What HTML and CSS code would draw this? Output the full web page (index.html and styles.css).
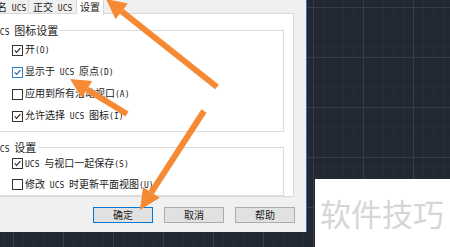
FILE: index.html
```html
<!DOCTYPE html>
<html lang="zh-CN">
<head>
<meta charset="utf-8">
<title>UCS</title>
<link rel="stylesheet" href="styles.css">
</head>
<body>
<div class="dialog">
  <div class="inner">
    <div class="tabs">
      <div class="tab t1">命名<span class="en"> UCS</span></div>
      <div class="tab t2">正交<span class="en"> UCS</span></div>
      <div class="tab t3 active">设置</div>
    </div>
    <div class="panel">
      <fieldset class="group g1">
        <legend><span class="en">UCS </span>图标设置</legend>
        <div class="row"><span class="box"><svg viewBox="0 0 11 11"><polyline points="2,5.2 4.4,7.8 9,2.6"/></svg></span><span class="label">开<span class="en">(O)</span></span></div>
        <div class="row"><span class="box focus"><svg viewBox="0 0 11 11"><polyline points="2,5.2 4.4,7.8 9,2.6"/></svg></span><span class="label">显示于<span class="en"> UCS </span>原点<span class="en">(D)</span></span></div>
        <div class="row"><span class="box"></span><span class="label">应用到所有活动视口<span class="en">(A)</span></span></div>
        <div class="row"><span class="box"><svg viewBox="0 0 11 11"><polyline points="2,5.2 4.4,7.8 9,2.6"/></svg></span><span class="label">允许选择<span class="en"> UCS </span>图标<span class="en">(I)</span></span></div>
      </fieldset>
      <fieldset class="group g2">
        <legend><span class="en">UCS </span>设置</legend>
        <div class="row"><span class="box"><svg viewBox="0 0 11 11"><polyline points="2,5.2 4.4,7.8 9,2.6"/></svg></span><span class="label"><span class="en">UCS </span>与视口一起保存<span class="en">(S)</span></span></div>
        <div class="row"><span class="box"></span><span class="label">修改<span class="en"> UCS </span>时更新平面视图<span class="en">(U)</span></span></div>
      </fieldset>
    </div>
    <div class="buttons">
      <div class="btn primary">确定</div>
      <div class="btn">取消</div>
      <div class="btn">帮助</div>
    </div>
  </div>
</div>
<div class="watermark">软件技巧</div>
<svg class="arrows" viewBox="0 0 450 247" width="450" height="247">
  <g fill="#f68a34" stroke="#f68a34">
    <line x1="217" y1="87" x2="121.7" y2="11.4" stroke-width="6"/>
    <polygon stroke="none" points="106,-1 127.9,3.6 115.5,19.2"/>
    <line x1="127" y1="114" x2="87" y2="89.5" stroke-width="6"/>
    <polygon stroke="none" points="70,79 92.2,81 81.8,98"/>
    <line x1="204" y1="111" x2="151.4" y2="192.4" stroke-width="6"/>
    <polygon stroke="none" points="140,210 159.8,197.8 143,187"/>
  </g>
</svg>
</body>
</html>
```
FILE: styles.css
```css
* { box-sizing: border-box; }
html, body { margin: 0; padding: 0; }
body {
  width: 450px;
  height: 247px;
  overflow: hidden;
  position: relative;
  font-family: "Noto Sans CJK SC", "Noto Sans", sans-serif;
  font-size: 10px;
  color: #1a1a1a;
  background-color: #222832;
  background-image:
    linear-gradient(to right, #363d48 1px, transparent 1px),
    linear-gradient(to bottom, #363d48 1px, transparent 1px),
    linear-gradient(to right, #272d37 1px, transparent 1px),
    linear-gradient(to bottom, #272d37 1px, transparent 1px);
  background-size: 50px 50px, 50px 50px, 10px 10px, 10px 10px;
  background-position: 13px 0, 0 7px, 3px 0, 0 7px;
}
.en {
  font-family: "DejaVu Sans Mono", "Liberation Mono", monospace;
  font-size: 8px;
  white-space: pre;
}
.dialog {
  width: 307px;
  height: 232px;
  background: #f0f0f0;
  border-right: 1px solid #3a72b4;
  overflow: hidden;
}
.inner {
  margin-left: -16px;
  width: 322px;
}
.tabs {
  display: flex;
  height: 14px;
  position: relative;
  z-index: 1;
}
.tab {
  height: 14px;
  line-height: 12px;
  padding-top: 1px;
  white-space: nowrap;
  border-right: 1px solid #d9d9d9;
  border-bottom: 1px solid #d9d9d9;
}
.t1 { width: 45px; padding-left: 3px; }
.t2 { width: 48px; padding-left: 4px; }
.t3 { width: 27px; padding-left: 3px; }
.tab.active {
  background: #fff;
  height: 15px;
  border-bottom: none;
}
.panel {
  width: 310px;
  height: 184px;
  margin-top: -1px;
  border: 1px solid #d9d9d9;
  background: #fff;
  padding: 10px 0 0 7px;
}
.group {
  margin: 0;
  padding: 3px 0 4px 0;
  border: 1px solid #dcdcdc;
  width: 292px;
  min-width: 0;
}
.group legend {
  padding: 0 2px;
  font-size: 11px;
  line-height: 12px;
  height: 12px;
}
.g2 {
  margin-top: 9px;
  padding: 0;
}
.row {
  display: flex;
  align-items: center;
  height: 22px;
  margin-left: 19px;
  white-space: nowrap;
}
.g2 .row { height: 21px; }
.label { line-height: 12px; }
.box {
  width: 11px;
  height: 11px;
  border: 1px solid #333;
  background: #fff;
  margin-right: 2px;
  flex: none;
  display: flex;
}
.box svg {
  width: 9px;
  height: 9px;
  fill: none;
  stroke: #222;
  stroke-width: 1.3;
}
.box.focus { border-color: #2f7fd0; }
.box.focus svg { stroke: #1b5aa0; }
.buttons {
  display: flex;
  justify-content: flex-end;
  gap: 11px;
  margin-top: 10px;
  padding-right: 11px;
}
.btn {
  width: 60px;
  height: 16px;
  border: 1px solid #adadad;
  background: #e1e1e1;
  display: flex;
  align-items: center;
  justify-content: center;
  line-height: 12px;
}
.btn.primary { border-color: #0078d7; }
.watermark {
  position: absolute;
  left: 315px;
  top: 179px;
  right: 0;
  bottom: 0;
  background: #fff;
  color: #d6d6d6;
  font-size: 31px;
  line-height: 31px;
  padding: 18px 0 0 5px;
  white-space: nowrap;
}
.arrows {
  position: absolute;
  left: 0;
  top: 0;
}
```
